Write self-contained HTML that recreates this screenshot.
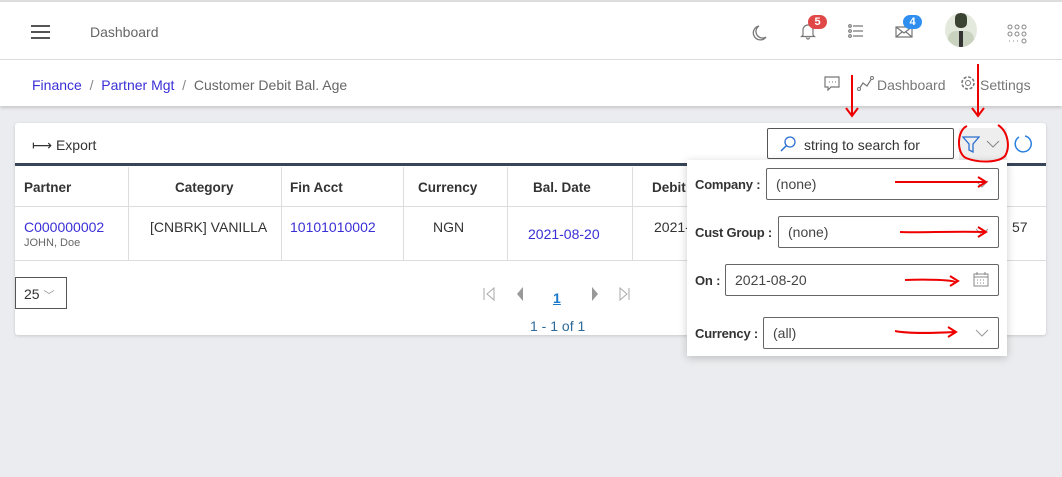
<!DOCTYPE html>
<html><head><style>
*{box-sizing:border-box;margin:0;padding:0}
body{width:1062px;height:477px;background:#ebecef;font-family:"Liberation Sans",sans-serif;font-size:14px;color:#333;position:relative;overflow:hidden}
.a{position:absolute}
.top{left:0;top:0;width:1062px;height:60px;background:#fff;border-top:2px solid #ddd;border-bottom:1px solid #ddd}
.bc{left:0;top:60px;width:1062px;height:46px;background:#fff;box-shadow:0 2px 3px rgba(0,0,0,.15)}
.card{left:15px;top:123px;width:1031px;height:212px;background:#fff;border-radius:3px;box-shadow:0 1px 3px rgba(0,0,0,.15)}
.blue{color:#3a2fd6}
.th{font-weight:bold;color:#333;font-size:13.5px}
.vl{width:1px;background:#ddd}
.pop{left:687px;top:160px;width:320px;height:196px;background:#fff;box-shadow:0 2px 8px rgba(0,0,0,.2)}
.sel{border:1px solid #666;height:32px;border-radius:2px;font-size:14px;color:#444;padding:7px 9px}
.lbl{font-weight:bold;font-size:13px;color:#333;letter-spacing:-0.2px}
.red{stroke:#e00;stroke-width:2;fill:none}
</style></head><body>
<div class="a top"></div>
<svg class="a" style="left:31px;top:24px" width="20" height="16"><path d="M0 2h19M0 8h19M0 14h19" stroke="#555" stroke-width="2"/></svg>
<div class="a" style="left:90px;top:24px;color:#666;font-size:14px">Dashboard</div>
<svg class="a" style="left:750px;top:24px" width="18" height="18"><path d="M9 2a7 7 0 1 0 7 11A6 6 0 0 1 9 2z" fill="none" stroke="#777" stroke-width="1.3"/></svg>
<svg class="a" style="left:800px;top:22px" width="16" height="18"><path d="M3 13V8a5 5 0 0 1 10 0v5l1.5 1.5h-13zM6.5 15.5a1.5 1.5 0 0 0 3 0" fill="none" stroke="#777" stroke-width="1.2"/></svg>
<div class="a" style="left:808px;top:15px;width:19px;height:14px;border-radius:7px;background:#e04848;color:#fff;font-size:11px;font-weight:bold;text-align:center;line-height:14px">5</div>
<svg class="a" style="left:848px;top:24px" width="16" height="14"><g stroke="#777" stroke-width="1.2" fill="none"><circle cx="2" cy="2" r="1.3"/><circle cx="2" cy="7" r="1.3"/><circle cx="2" cy="12" r="1.3"/><path d="M5 2h10M5 7h10M5 12h10"/></g></svg>
<svg class="a" style="left:895px;top:22px" width="18" height="16"><path d="M1 5h16v10H1zM1 5l8 6 8-6M1 15l6-5M17 15l-6-5" fill="none" stroke="#777" stroke-width="1.2"/></svg>
<div class="a" style="left:903px;top:15px;width:19px;height:14px;border-radius:7px;background:#2e8ff0;color:#fff;font-size:11px;font-weight:bold;text-align:center;line-height:14px">4</div>
<div class="a" style="left:945px;top:13px;width:32px;height:34px;border-radius:50%;background:#e3e9dc;overflow:hidden">
<div style="position:absolute;left:10px;top:0px;width:12px;height:15px;background:#3b4433;border-radius:5px"></div>
<div style="position:absolute;left:3px;top:18px;width:26px;height:16px;background:#c9d2bf;border-radius:8px 8px 0 0"></div>
<div style="position:absolute;left:14px;top:18px;width:4px;height:16px;background:#333"></div></div>
<svg class="a" style="left:1007px;top:24px" width="20" height="20"><g fill="none" stroke="#888" stroke-width="1"><circle cx="3" cy="3" r="2"/><circle cx="10" cy="3" r="2"/><circle cx="17" cy="3" r="2"/><circle cx="3" cy="10" r="2"/><circle cx="10" cy="10" r="2"/><circle cx="17" cy="10" r="2"/><circle cx="17" cy="17" r="2"/></g><path d="M2 17h1M6 17h1M10 17h1" stroke="#888"/></svg>

<div class="a bc"></div>
<div class="a" style="left:32px;top:77px;font-size:14px"><span class="blue">Finance</span> <span style="color:#888">&nbsp;/&nbsp;</span> <span class="blue">Partner Mgt</span> <span style="color:#888">&nbsp;/&nbsp;</span> <span style="color:#666">Customer Debit Bal. Age</span></div>
<svg class="a" style="left:824px;top:76px" width="16" height="15"><path d="M1 1h14v10H7l-3 3v-3H1z" fill="none" stroke="#777" stroke-width="1.2"/><path d="M5 6h1M8 6h1M11 6h1" stroke="#777"/></svg>
<svg class="a" style="left:857px;top:75px" width="18" height="16"><path d="M2 14l4-6 4 3 5-8" fill="none" stroke="#777" stroke-width="1.2"/><circle cx="2" cy="14" r="1.5" fill="#fff" stroke="#777"/><circle cx="15" cy="3" r="1.5" fill="#fff" stroke="#777"/></svg>
<div class="a" style="left:877px;top:77px;color:#777">Dashboard</div>
<svg class="a" style="left:960px;top:75px" width="16" height="16"><circle cx="8" cy="8" r="2.5" fill="none" stroke="#777"/><circle cx="8" cy="8" r="6" fill="none" stroke="#777" stroke-width="1.6" stroke-dasharray="3 1.7"/></svg>
<div class="a" style="left:980px;top:77px;color:#777">Settings</div>

<div class="a card"></div>
<div class="a" style="left:32px;top:137px;color:#333">⟼ Export</div>
<div class="a" style="left:767px;top:128px;width:187px;height:31px;border:1px solid #555;border-radius:2px"></div>
<svg class="a" style="left:779px;top:135px" width="18" height="18"><circle cx="11" cy="7" r="5" fill="none" stroke="#2a70d0" stroke-width="1.3"/><path d="M7.5 10.5L2 16" stroke="#2a70d0" stroke-width="1.5"/></svg>
<div class="a" style="left:804px;top:137px;color:#333">string to search for</div>
<div class="a" style="left:959px;top:128px;width:48px;height:33px;background:#eee"></div>
<svg class="a" style="left:962px;top:136px" width="18" height="17"><path d="M1 1h16l-6 7v8l-4-2V8z" fill="none" stroke="#2a70d0" stroke-width="1.3"/></svg>
<svg class="a" style="left:986px;top:140px" width="14" height="8"><path d="M1 1l6 6 6-6" fill="none" stroke="#888"/></svg>
<svg class="a" style="left:1013px;top:134px" width="20" height="20"><path d="M6 3A8 8 0 1 0 12 2" fill="none" stroke="#2a80e0" stroke-width="1.5"/></svg>
<div class="a" style="left:15px;top:163px;width:1031px;height:3px;background:#384458"></div>
<div class="a" style="left:15px;top:206px;width:1031px;height:1px;background:#ddd"></div>
<div class="a" style="left:15px;top:260px;width:1031px;height:1px;background:#ddd"></div>
<div class="a vl" style="left:128px;top:167px;height:93px"></div>
<div class="a vl" style="left:281px;top:167px;height:93px"></div>
<div class="a vl" style="left:403px;top:167px;height:93px"></div>
<div class="a vl" style="left:507px;top:167px;height:93px"></div>
<div class="a vl" style="left:632px;top:167px;height:93px"></div>
<div class="a th" style="left:24px;top:180px">Partner</div>
<div class="a th" style="left:175px;top:180px">Category</div>
<div class="a th" style="left:290px;top:180px">Fin Acct</div>
<div class="a th" style="left:418px;top:180px">Currency</div>
<div class="a th" style="left:533px;top:180px">Bal. Date</div>
<div class="a th" style="left:652px;top:180px">Debit</div>
<div class="a blue" style="left:24px;top:219px">C000000002</div>
<div class="a" style="left:24px;top:237px;font-size:11px;color:#666">JOHN, Doe</div>
<div class="a" style="left:150px;top:219px">[CNBRK] VANILLA</div>
<div class="a blue" style="left:290px;top:219px">10101010002</div>
<div class="a" style="left:433px;top:219px">NGN</div>
<div class="a blue" style="left:528px;top:226px">2021-08-20</div>
<div class="a" style="left:654px;top:219px">2021-</div>
<div class="a" style="left:1012px;top:219px">57</div>
<div class="a" style="left:15px;top:277px;width:52px;height:32px;border:1px solid #555;padding:8px 8px;font-size:14px">25 <span style="color:#999;font-size:11px">﹀</span></div>
<svg class="a" style="left:482px;top:286px" width="150" height="16"><path d="M2 2v12M12 2L5 8l7 6z" fill="none" stroke="#aaa"/><path d="M41 1L35 8l6 7z" fill="#999"/><path d="M110 1l6 7-6 7z" fill="#999"/><path d="M138 2l7 6-7 6zM147 2v12" fill="none" stroke="#aaa"/></svg>
<div class="a" style="left:553px;top:290px;color:#1a78c8;font-weight:bold;text-decoration:underline">1</div>
<div class="a" style="left:530px;top:318px;color:#2d6a9a">1 - 1 of 1</div>

<div class="a pop"></div>
<div class="a lbl" style="left:695px;top:177px">Company :</div>
<div class="a sel" style="left:766px;top:168px;width:233px">(none)</div>
<div class="a lbl" style="left:695px;top:225px">Cust Group :</div>
<div class="a sel" style="left:778px;top:216px;width:221px">(none)</div>
<div class="a lbl" style="left:695px;top:273px">On :</div>
<div class="a sel" style="left:725px;top:264px;width:274px">2021-08-20</div>
<div class="a lbl" style="left:695px;top:326px">Currency :</div>
<div class="a sel" style="left:763px;top:317px;width:236px">(all)</div>
<svg class="a" style="left:975px;top:180px" width="14" height="8"><path d="M1 1l6 6 6-6" fill="none" stroke="#999"/></svg>
<svg class="a" style="left:975px;top:228px" width="14" height="8"><path d="M1 1l6 6 6-6" fill="none" stroke="#999"/></svg>
<svg class="a" style="left:975px;top:329px" width="14" height="8"><path d="M1 1l6 6 6-6" fill="none" stroke="#999"/></svg>
<svg class="a" style="left:973px;top:272px" width="16" height="15"><rect x="1" y="2" width="14" height="12" fill="none" stroke="#888"/><path d="M1 5h14M4 0v3M12 0v3M4 8h1M7 8h1M10 8h1M4 11h1M7 11h1M10 11h1" stroke="#888"/></svg>
<svg class="a" style="left:0;top:0" width="1062" height="477"><g class="red"><path d="M852 75v40M846 108l6 8 6-8"/><path d="M978 64v51M972 108l6 8 6-8"/><path d="M967 126C957 130 956 153 966 158c12 5 32 5 39-2 5-8 4-24-7-31"/><path d="M895 182h90M978 177l8 5-8 5"/><path d="M900 232c20 1 50-1 85 0M978 227l8 5-8 5"/><path d="M905 280c20-1 50 0 50 2M950 276l8 5-8 5"/><path d="M895 331c15 3 40 2 60 1M948 327l8 5-8 5"/></g></svg>
</body></html>
